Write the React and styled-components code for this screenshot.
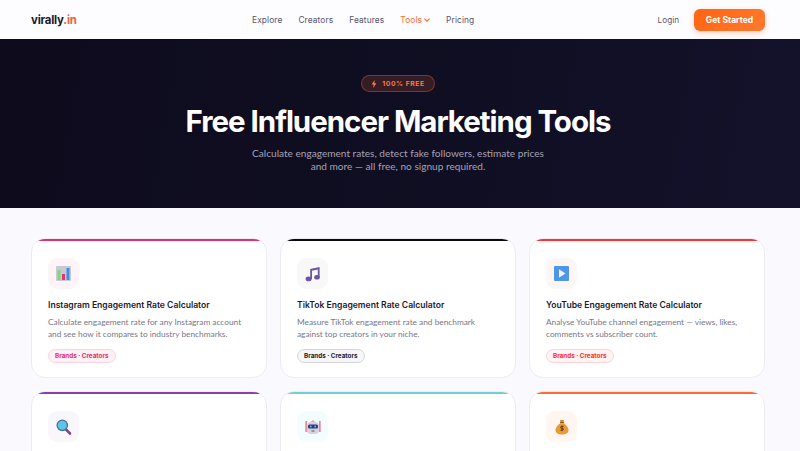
import React from 'react'
import styled, { createGlobalStyle } from 'styled-components'

const GlobalStyle = createGlobalStyle`
  html, body {
    margin: 0;
    padding: 0;
    height: 451px;
    overflow: hidden;
    background: #f9f9fe;
    font-family: 'Inter', 'Liberation Sans', sans-serif;
  }
  * { box-sizing: border-box; }
`

const Nav = styled.nav`
  height: 39px;
  background: #fdfdff;
  display: grid;
  grid-template-columns: 221px auto 1fr;
  align-items: center;
  padding: 0 35px 0 31px;
`
const Logo = styled.div`
  font-size: 11.4px;
  font-weight: 700;
  letter-spacing: -0.2px;
  color: #1a1a2e;
  span { color: #f0603a; }
`
const NavLinks = styled.div`
  display: flex;
  align-items: center;
  gap: 16px;
`
const NavLink = styled.a`
  display: flex;
  align-items: center;
  gap: 2px;
  font-size: 8.4px;
  font-weight: 400;
  letter-spacing: 0.1px;
  color: ${p => (p.$active ? '#ff6b35' : '#55556d')};
`
const NavRight = styled.div`
  display: flex;
  align-items: center;
  justify-content: flex-end;
  gap: 15px;
`
const Login = styled.a`
  font-size: 8.2px;
  color: #55556d;
`
const CtaButton = styled.button`
  width: 71px;
  height: 22px;
  border: none;
  border-radius: 6px;
  padding: 0;
  background: linear-gradient(135deg, #ff6410, #ff7a2e);
  box-shadow: 0 2px 6px rgba(255, 107, 53, 0.3);
  color: #fff;
  font-family: inherit;
  font-size: 8.5px;
  font-weight: 700;
`

const Hero = styled.header`
  height: 169px;
  background: linear-gradient(100deg, #0e0b1d 0%, #100e22 55%, #14122b 100%);
  display: flex;
  flex-direction: column;
  align-items: center;
  padding: 36px 4px 0 0;
`
const Badge = styled.div`
  display: flex;
  align-items: center;
  gap: 5px;
  height: 17px;
  padding: 0 9px;
  border-radius: 9px;
  background: rgba(255, 107, 53, 0.16);
  border: 1px solid rgba(255, 107, 53, 0.35);
  color: #ff7a3d;
  font-size: 6.8px;
  font-weight: 700;
  letter-spacing: 0.55px;
`
const HeroTitle = styled.h1`
  margin: 10px 0 0;
  font-size: 29.5px;
  line-height: 38px;
  font-weight: 700;
  letter-spacing: -1.03px;
  color: #fff;
`
const HeroText = styled.p`
  margin: 7px 0 0;
  font-family: 'Lato', 'Liberation Sans', sans-serif;
  font-size: 10.1px;
  line-height: 13px;
  font-weight: 400;
  text-align: center;
  color: #a5a3b5;
`

const Grid = styled.main`
  display: grid;
  grid-template-columns: repeat(3, 236px);
  gap: 13px;
  padding: 30px 0 0 31px;
`
const Card = styled.article`
  position: relative;
  height: 140px;
  padding: 19px 16px 0;
  background: #fff;
  border: 1px solid #edecf4;
  border-radius: 14px;
  overflow: hidden;
  &::before {
    content: '';
    position: absolute;
    top: -1px;
    left: 0;
    right: 0;
    height: 3px;
    background: ${p => p.$accent};
  }
`
const IconBox = styled.div`
  width: 31px;
  height: 31px;
  border-radius: 9px;
  display: flex;
  align-items: center;
  justify-content: center;
  background: ${p => p.$bg};
`
const CardTitle = styled.h3`
  margin: 9px 0 0;
  font-size: 8.6px;
  line-height: 14px;
  font-weight: 600;
  color: #1a1a2e;
  white-space: nowrap;
`
const CardText = styled.p`
  margin: 4px 0 0;
  font-family: 'Lato', 'Liberation Sans', sans-serif;
  font-size: 8.3px;
  line-height: 12px;
  color: #77778c;
  white-space: pre;
`
const Tag = styled.span`
  display: block;
  width: fit-content;
  margin-top: 9px;
  height: 14px;
  padding: 0 6px;
  border-radius: 7px;
  font-size: 6.3px;
  line-height: 12px;
  font-weight: 700;
  border: 1px solid ${p => p.$border};
  background: ${p => p.$bg};
  color: ${p => p.$color};
`

const Bolt = () => (
  <svg width="6" height="8" viewBox="0 0 6 8">
    <path d="M3.6 0 .6 4.4h2L2.2 8l3.2-4.7h-2z" fill="#ff7a3d" />
  </svg>
)
const Chevron = () => (
  <svg width="6" height="4" viewBox="0 0 6 4" fill="none" stroke="#ff6b35" strokeWidth="1.1">
    <path d="M.4.6 3 3.2 5.6.6" />
  </svg>
)

const ChartIcon = () => (
  <svg width="15" height="15" viewBox="0 0 15 15">
    <rect width="15" height="15" rx="1" fill="#c9c8d6" />
    <rect x="1.5" y="4" width="3" height="10" fill="#84d67c" />
    <rect x="6" y="8" width="3" height="6" fill="#e8336d" />
    <rect x="10.5" y="2" width="3" height="12" fill="#3d8fe8" />
  </svg>
)
const MusicIcon = () => (
  <svg width="16" height="16" viewBox="0 0 16 16" fill="#6a55a8">
    <path d="M5.2 3 14.6.9v10.4h-1.8V3.4L7 4.7v8.2H5.2z" />
    <ellipse cx="3.6" cy="12.9" rx="3" ry="2.4" />
    <ellipse cx="12" cy="11.3" rx="2.8" ry="2.3" />
  </svg>
)
const PlayIcon = () => (
  <svg width="15" height="15" viewBox="0 0 15 15">
    <rect width="15" height="15" rx="1" fill="#4d96ea" />
    <path d="M5 3.2 11.5 7.5 5 11.8z" fill="#f0f4fa" />
  </svg>
)
const SearchIcon = () => (
  <svg width="16" height="16" viewBox="0 0 16 16">
    <path d="M9.5 10 14 14.5" stroke="#7b4a8c" strokeWidth="2.6" strokeLinecap="round" />
    <circle cx="6.3" cy="6.3" r="5.2" fill="#5cc4e8" stroke="#4a6f96" strokeWidth="1.3" />
  </svg>
)
const RobotIcon = () => (
  <svg width="16" height="16" viewBox="0 0 16 16">
    <rect x="0.5" y="2" width="1.2" height="11" fill="#e8566a" />
    <rect x="14.3" y="2" width="1.2" height="11" fill="#e8566a" />
    <path d="M5.5 3 8 1l2.5 2z" fill="#f3b35a" />
    <rect x="2" y="3" width="12" height="12" rx="4" fill="#d9d0e2" />
    <rect x="3" y="5.5" width="10" height="4" rx="1.5" fill="#2d3c78" />
    <circle cx="5.8" cy="7.5" r="0.9" fill="#5cc4e8" />
    <circle cx="10.2" cy="7.5" r="0.9" fill="#5cc4e8" />
    <rect x="6.5" y="11.5" width="3" height="1" fill="#55506e" />
  </svg>
)
const MoneyIcon = () => (
  <svg width="14" height="16" viewBox="0 0 14 16">
    <path d="M5 1h4L8.4 4H5.6z" fill="#d98a2c" />
    <rect x="5" y="3.2" width="4" height="1" fill="#7a4a1a" />
    <path d="M5.2 4.2h3.6C11.5 6 13.5 8.5 13.5 11c0 3-2.6 4.5-6.5 4.5S.5 14 .5 11c0-2.5 2-5 4.7-6.8z" fill="#ea9a35" />
    <path d="M8.6 7.4H6.4c-1 0-1 1.9 0 1.9h1.2c1 0 1 1.9 0 1.9H5.4M7 6.5v5.6" fill="none" stroke="#5c3a1c" strokeWidth="1" />
  </svg>
)

const tools = [
  {
    title: 'Instagram Engagement Rate Calculator',
    text: 'Calculate engagement rate for any Instagram account\nand see how it compares to industry benchmarks.',
    accent: '#e1306c',
    iconBg: '#fef4f7',
    icon: <ChartIcon />,
    tag: { color: '#e1306c', bg: '#fdf1f5', border: '#f9d3e0' },
  },
  {
    title: 'TikTok Engagement Rate Calculator',
    text: 'Measure TikTok engagement rate and benchmark\nagainst top creators in your niche.',
    accent: '#0a0a12',
    iconBg: '#f8f8f9',
    icon: <MusicIcon />,
    tag: { color: '#1a1a2e', bg: '#f6f6f8', border: '#d5d5dc' },
  },
  {
    title: 'YouTube Engagement Rate Calculator',
    text: 'Analyse YouTube channel engagement — views, likes,\ncomments vs subscriber count.',
    accent: '#ff3131',
    iconBg: '#fef6f5',
    icon: <PlayIcon />,
    tag: { color: '#ff2e2e', bg: '#fff3f3', border: '#fdd2d2' },
  },
  { accent: '#8a3fa8', iconBg: '#faf7fc', icon: <SearchIcon /> },
  { accent: '#6fd0d0', iconBg: '#f4fdfd', icon: <RobotIcon /> },
  { accent: '#ff6b35', iconBg: '#fff6f2', icon: <MoneyIcon /> },
]

export default function App() {
  return (
    <>
      <GlobalStyle />
      <Nav>
        <Logo>virally<span>.in</span></Logo>
        <NavLinks>
          <NavLink>Explore</NavLink>
          <NavLink>Creators</NavLink>
          <NavLink>Features</NavLink>
          <NavLink $active>Tools <Chevron /></NavLink>
          <NavLink>Pricing</NavLink>
        </NavLinks>
        <NavRight>
          <Login>Login</Login>
          <CtaButton>Get Started</CtaButton>
        </NavRight>
      </Nav>
      <Hero>
        <Badge><Bolt /> 100% FREE</Badge>
        <HeroTitle>Free Influencer Marketing Tools</HeroTitle>
        <HeroText>
          Calculate engagement rates, detect fake followers, estimate prices
          <br />
          and more — all free, no signup required.
        </HeroText>
      </Hero>
      <Grid>
        {tools.map((tool, i) => (
          <Card key={i} $accent={tool.accent}>
            <IconBox $bg={tool.iconBg}>{tool.icon}</IconBox>
            {tool.title && <CardTitle>{tool.title}</CardTitle>}
            {tool.text && <CardText>{tool.text}</CardText>}
            {tool.tag && (
              <Tag $color={tool.tag.color} $bg={tool.tag.bg} $border={tool.tag.border}>Brands · Creators</Tag>
            )}
          </Card>
        ))}
      </Grid>
    </>
  )
}
